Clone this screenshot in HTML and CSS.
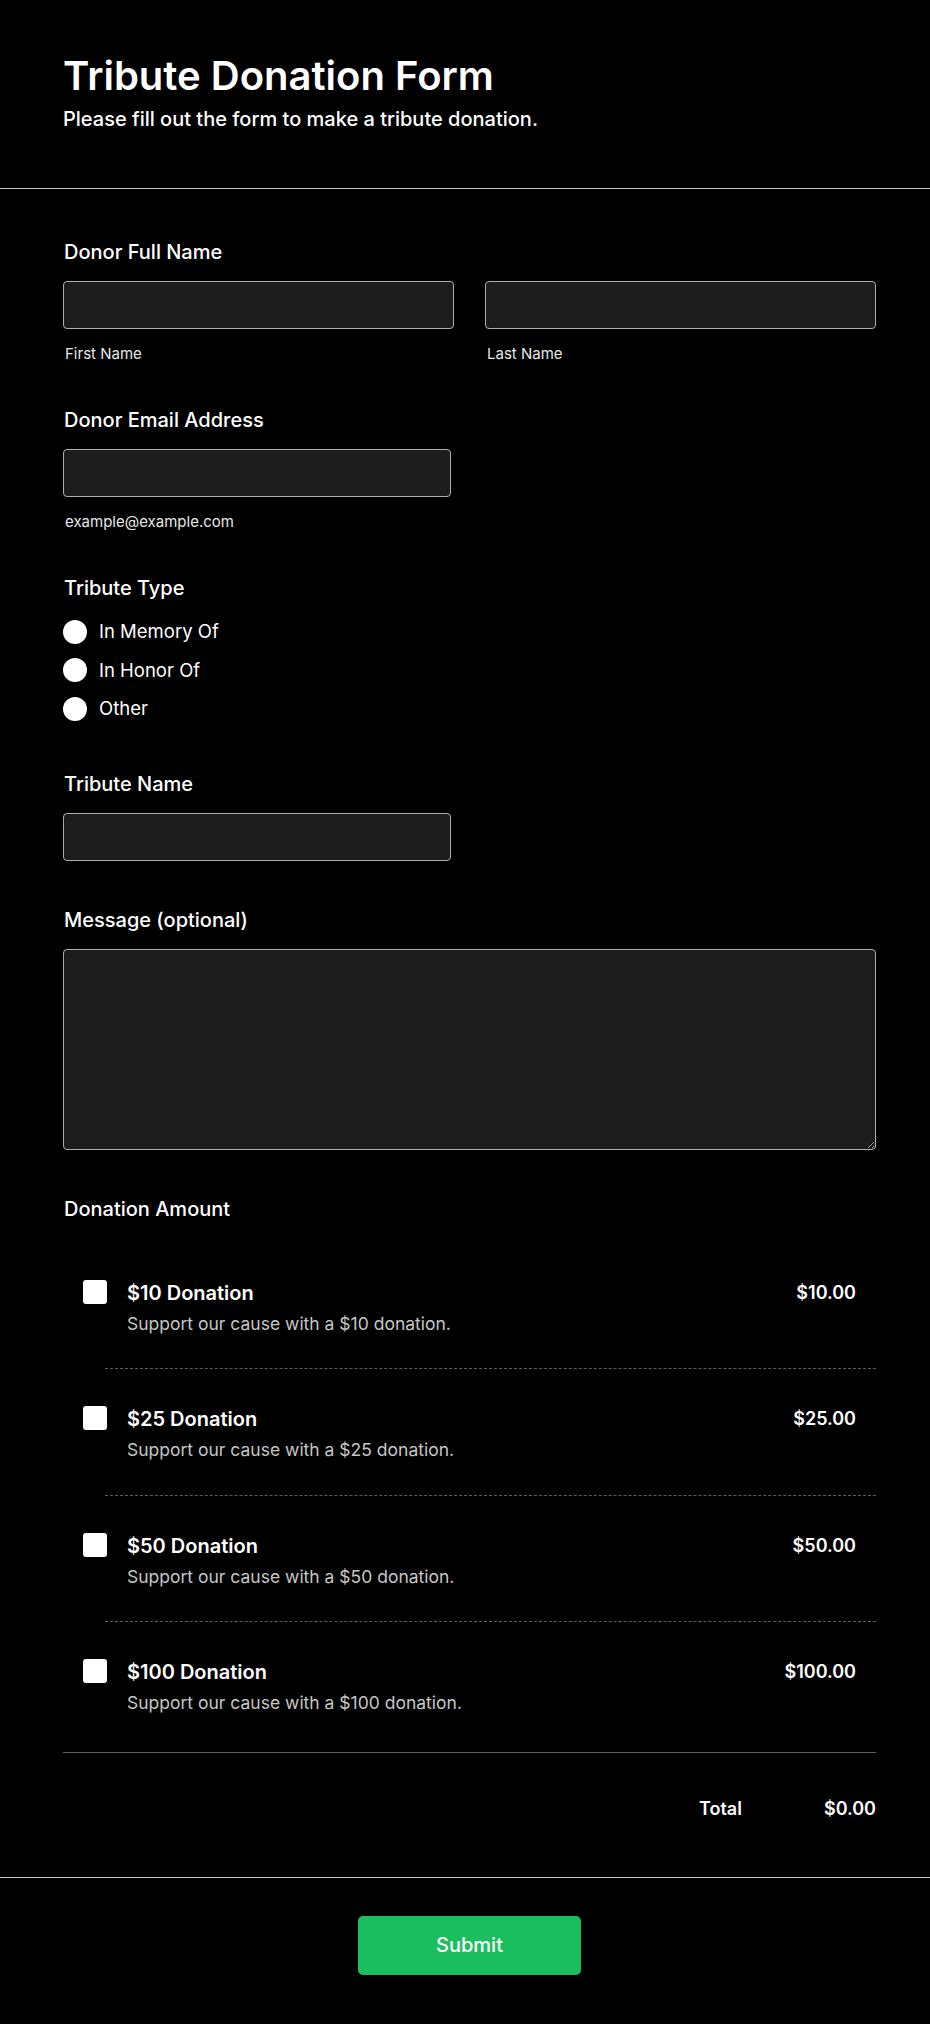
FILE: index.html
```html
<!DOCTYPE html>
<html lang="en">
<head>
<meta charset="utf-8">
<title>Tribute Donation Form</title>
<link rel="stylesheet" href="styles.css">
</head>
<body>
<header class="page-header">
  <div class="wrap">
    <h1 class="title">Tribute Donation Form</h1>
    <p class="subtitle">Please fill out the form to make a tribute donation.</p>
  </div>
</header>

<main class="form wrap">
  <section class="field field-after-sub">
    <div class="label">Donor Full Name</div>
    <div class="name-grid">
      <div>
        <input class="input" type="text" aria-label="First Name">
        <div class="sublabel">First Name</div>
      </div>
      <div>
        <input class="input" type="text" aria-label="Last Name">
        <div class="sublabel">Last Name</div>
      </div>
    </div>
  </section>

  <section class="field field-after-sub2">
    <div class="label">Donor Email Address</div>
    <input class="input input-half" type="email" aria-label="Email">
    <div class="sublabel">example@example.com</div>
  </section>

  <section class="field field-after-radios">
    <div class="label">Tribute Type</div>
    <div class="radio-list">
      <label class="radio-row"><input class="radio" type="radio" name="tt"><span>In Memory Of</span></label>
      <label class="radio-row"><input class="radio" type="radio" name="tt"><span>In Honor Of</span></label>
      <label class="radio-row"><input class="radio" type="radio" name="tt"><span>Other</span></label>
    </div>
  </section>

  <section class="field field-after-input">
    <div class="label">Tribute Name</div>
    <input class="input input-half" type="text" aria-label="Tribute Name">
  </section>

  <section class="field field-after-textarea">
    <div class="label">Message (optional)</div>
    <textarea class="textarea" aria-label="Message"></textarea>
  </section>

  <section class="field donation">
    <div class="label">Donation Amount</div>
    <div class="products">
      <div class="item">
        <input class="check" type="checkbox" aria-label="$10 Donation">
        <div class="item-text">
          <div class="item-title">$10 Donation</div>
          <div class="item-desc">Support our cause with a $10 donation.</div>
        </div>
        <div class="item-price">$10.00</div>
      </div>
      <hr class="dash">
      <div class="item">
        <input class="check" type="checkbox" aria-label="$25 Donation">
        <div class="item-text">
          <div class="item-title">$25 Donation</div>
          <div class="item-desc">Support our cause with a $25 donation.</div>
        </div>
        <div class="item-price">$25.00</div>
      </div>
      <hr class="dash">
      <div class="item">
        <input class="check" type="checkbox" aria-label="$50 Donation">
        <div class="item-text">
          <div class="item-title">$50 Donation</div>
          <div class="item-desc">Support our cause with a $50 donation.</div>
        </div>
        <div class="item-price">$50.00</div>
      </div>
      <hr class="dash">
      <div class="item">
        <input class="check" type="checkbox" aria-label="$100 Donation">
        <div class="item-text">
          <div class="item-title">$100 Donation</div>
          <div class="item-desc">Support our cause with a $100 donation.</div>
        </div>
        <div class="item-price">$100.00</div>
      </div>
    </div>
    <hr class="solid">
    <div class="total-row">
      <span class="total-label">Total</span>
      <span class="total-value">$0.00</span>
    </div>
  </section>
</main>

<footer class="page-footer">
  <div class="wrap footer-inner">
    <button class="submit" type="button">Submit</button>
  </div>
</footer>
</body>
</html>
```

FILE: styles.css
```css
* { box-sizing: border-box; }

html, body {
  margin: 0;
  padding: 0;
  background: #000;
  color: #fff;
  font-family: Inter, "Noto Sans", "Liberation Sans", sans-serif;
}

.wrap {
  width: 813px;
  margin-left: 63px;
}

/* Header */
.page-header {
  padding-top: 52px;
  padding-bottom: 55px;
  border-bottom: 1px solid #c8c8c8;
}
.title {
  margin: 0;
  font-size: 40px;
  line-height: 48px;
  font-weight: 600;
  letter-spacing: 0;
}
.subtitle {
  margin: 6px 0 0;
  font-size: 20px;
  line-height: 27px;
  font-weight: 500;
}

/* Form */
.form {
  padding-top: 49px;
}
.field { display: block; }
.field-after-sub { margin-bottom: 42px; }
.field-after-sub2 { margin-bottom: 42px; }
.field-after-radios { margin-bottom: 48px; }
.field-after-input { margin-bottom: 45px; }
.field-after-textarea { margin-bottom: 44.5px; }

.label {
  font-size: 20px;
  line-height: 28px;
  font-weight: 500;
  padding-left: 1px;
  margin-bottom: 15px;
}

.name-grid {
  display: grid;
  grid-template-columns: 391px 391px;
  column-gap: 31px;
}

.input {
  display: block;
  width: 100%;
  height: 48px;
  background: #1c1c1c;
  border: 1px solid #adadad;
  border-radius: 4px;
  color: #fff;
  font: inherit;
  font-size: 16px;
  padding: 0 12px;
  outline: none;
}
.input-half { width: 388px; }

.sublabel {
  margin-top: 14px;
  font-size: 15px;
  line-height: 21px;
  color: #e8e8e8;
  padding-left: 2px;
}

/* Radios */
.radio-list {
  display: flex;
  flex-direction: column;
  gap: 11.5px;
  margin-top: 16px;
}
.radio-row {
  display: flex;
  align-items: center;
  gap: 12px;
  height: 27px;
  font-size: 18.5px;
  line-height: 27px;
}
.radio {
  appearance: none;
  -webkit-appearance: none;
  margin: 0;
  width: 24px;
  height: 24px;
  border-radius: 50%;
  background: #fff;
  border: none;
  flex: none;
}

/* Textarea */
.textarea {
  display: block;
  width: 100%;
  height: 201px;
  background: #1c1c1c;
  border: 1px solid #adadad;
  border-radius: 4px;
  color: #fff;
  font: inherit;
  padding: 10px 12px;
  color-scheme: dark;
  outline: none;
}

/* Donation products */
.donation .label { margin-bottom: 20px; }

.item {
  display: flex;
  align-items: flex-start;
  padding: 35px 20px 32.5px 20px;
}
.check {
  appearance: none;
  -webkit-appearance: none;
  margin: 2px 20px 0 0;
  width: 24px;
  height: 24px;
  background: #fff;
  border-radius: 3px;
  border: none;
  flex: none;
}
.item-text { flex: 1; }
.item-title {
  font-size: 20px;
  line-height: 30px;
  font-weight: 600;
}
.item-desc {
  margin-top: 4px;
  font-size: 17.5px;
  line-height: 24px;
  color: #c6c6c6;
}
.item-price {
  font-size: 18px;
  line-height: 27px;
  font-weight: 600;
  margin-top: 1px;
}

.dash {
  margin: 0 0 0 42px;
  border: none;
  border-top: 1px dashed #5c5c5c;
  height: 0;
}
.solid {
  margin: 4.5px 0 0;
  border: none;
  border-top: 1px solid #5e5e5e;
  height: 0;
}

.total-row {
  display: flex;
  justify-content: flex-end;
  gap: 82px;
  margin-top: 42px;
  margin-bottom: 54.5px;
  font-size: 18px;
  line-height: 27px;
  font-weight: 600;
}

/* Footer */
.page-footer {
  border-top: 1px solid #c8c8c8;
  padding-top: 38px;
  padding-bottom: 50px;
}
.footer-inner {
  display: flex;
  justify-content: center;
}
.submit {
  width: 223px;
  height: 59px;
  background: #1bbe5e;
  color: #fff;
  border: none;
  border-radius: 5px;
  font-family: inherit;
  font-size: 20px;
  font-weight: 500;
  cursor: pointer;
}
```
